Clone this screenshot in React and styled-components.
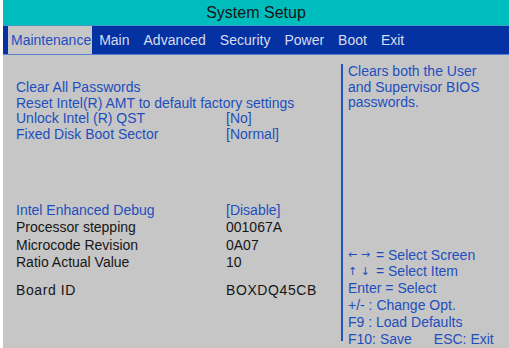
import React from 'react';
import styled, { createGlobalStyle } from 'styled-components';

const GlobalStyle = createGlobalStyle`
  html, body {
    margin: 0;
    padding: 0;
    background: #ffffff;
  }
  body {
    font-family: "Liberation Sans", Arial, sans-serif;
  }
`;

const StyledScreen = styled.div`
  width: 506px;
  height: 348px;
  margin-left: 3px;
  display: flex;
  flex-direction: column;
  background: #c6c6c6;
  overflow: hidden;
`;

const StyledTitle = styled.div`
  height: 25px;
  display: flex;
  align-items: center;
  justify-content: center;
  background: #00bdbd;
  border-bottom: 1px solid #3a9ec8;
  color: #141414;
  font-size: 16px;
`;

const StyledTabBar = styled.div`
  height: 28px;
  display: flex;
  align-items: stretch;
  padding-left: 5px;
  background: #0532a2;
  border-bottom: 1px solid #5b7fd0;
`;

const StyledTab = styled.div`
  display: flex;
  align-items: center;
  padding: ${({ active }) => (active ? '0 1px 0 3px' : '0 7px')};
  background: ${({ active }) => (active ? '#c6c6c6' : 'transparent')};
  color: ${({ active }) => (active ? '#1e4ebd' : '#d7dcee')};
  font-size: 14px;
`;

const StyledBody = styled.div`
  flex: 1;
  display: grid;
  grid-template-columns: 338px 2px 1fr;
`;

const StyledLeft = styled.div`
  padding: 24px 0 0 13px;
  display: flex;
  flex-direction: column;
`;

const StyledDivider = styled.div`
  background: #2052c0;
  margin: 9px 0 7px;
`;

const StyledRight = styled.div`
  padding: 9px 0 1px 5px;
  display: flex;
  flex-direction: column;
  justify-content: space-between;
`;

const StyledRow = styled.div`
  display: grid;
  grid-template-columns: 210px 1fr;
  height: ${({ h }) => h}px;
  margin-top: ${({ gap }) => gap || 0}px;
  align-items: center;
  color: ${({ dark }) => (dark ? '#161616' : '#1e4ebd')};
  font-size: 14px;
  white-space: nowrap;
  letter-spacing: ${({ spread }) => spread || 0}px;
`;

const StyledHelp = styled.div`
  color: #1e4ebd;
  font-size: 14px;
  line-height: 15.5px;
`;

const StyledKeys = styled.div`
  display: flex;
  flex-direction: column;
`;

const StyledKey = styled.div`
  height: 16.8px;
  display: flex;
  align-items: center;
  gap: ${({ gap }) => gap || 0}px;
  color: #1e4ebd;
  font-size: 14px;
  white-space: pre;
`;

const StyledArrow = styled.span`
  font-family: "DejaVu Sans", sans-serif;
  font-size: 11px;
  margin-right: 6px;
`;

const tabs = ['Maintenance', 'Main', 'Advanced', 'Security', 'Power', 'Boot', 'Exit'];

const items = [
  { label: 'Clear All Passwords', h: 15.5 },
  { label: 'Reset Intel(R) AMT to default factory settings', h: 15.5 },
  { label: 'Unlock Intel (R) QST', value: '[No]', h: 15.5 },
  { label: 'Fixed Disk Boot Sector', value: '[Normal]', h: 15.5 },
  { label: 'Intel Enhanced Debug', value: '[Disable]', h: 17.5, gap: 60 },
  { label: 'Processor stepping', value: '001067A', h: 17.5, dark: true },
  { label: 'Microcode Revision', value: '0A07', h: 17.5, dark: true },
  { label: 'Ratio Actual Value', value: '10', h: 17.5, dark: true },
  { label: 'Board ID', value: 'BOXDQ45CB', h: 17.5, gap: 10, dark: true, spread: 0.6 },
];

const App = () => (
  <>
    <GlobalStyle />
    <StyledScreen>
      <StyledTitle>System Setup</StyledTitle>
      <StyledTabBar>
        {tabs.map((tab, i) => (
          <StyledTab key={tab} active={i === 0}>{tab}</StyledTab>
        ))}
      </StyledTabBar>
      <StyledBody>
        <StyledLeft>
          {items.map((item) => (
            <StyledRow key={item.label} h={item.h} gap={item.gap} dark={item.dark} spread={item.spread}>
              <span>{item.label}</span>
              <span>{item.value}</span>
            </StyledRow>
          ))}
        </StyledLeft>
        <StyledDivider />
        <StyledRight>
          <StyledHelp>
            Clears both the User<br />
            and Supervisor BIOS<br />
            passwords.
          </StyledHelp>
          <StyledKeys>
            <StyledKey><StyledArrow>← →</StyledArrow>= Select Screen</StyledKey>
            <StyledKey><StyledArrow>↑ ↓</StyledArrow>= Select Item</StyledKey>
            <StyledKey>Enter = Select</StyledKey>
            <StyledKey>+/- : Change Opt.</StyledKey>
            <StyledKey>F9 : Load Defaults</StyledKey>
            <StyledKey gap={22}><span>F10: Save</span><span>ESC: Exit</span></StyledKey>
          </StyledKeys>
        </StyledRight>
      </StyledBody>
    </StyledScreen>
  </>
);

export default App;
